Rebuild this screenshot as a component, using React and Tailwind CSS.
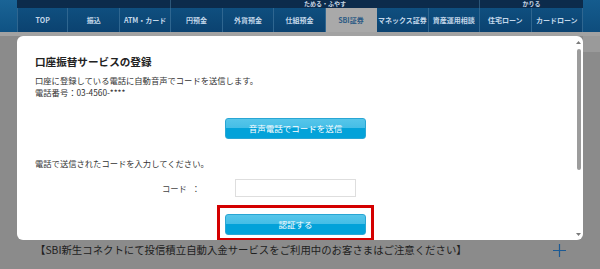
const navItems = [
  'TOP',
  '振込',
  'ATM・カード',
  '円預金',
  '外貨預金',
  '仕組預金',
  'SBI証券',
  'マネックス証券',
  '資産運用相談',
  '住宅ローン',
  'カードローン',
];

const font = { fontFamily: '"Noto Sans CJK JP", "Noto Sans", sans-serif' };

const Header = () => (
  <div className="flex h-[32px]">
    <div className="w-[17px] bg-gradient-to-b from-[#1a6496] to-[#0f5283]" />
    <div className="flex w-[566px] flex-col">
      {/* group labels */}
      <div className="flex h-[8px] bg-[#0c2b4b] text-[6px] font-bold leading-[8px] text-[#c9d8e6]">
        <div className="w-[154px] border-r border-[#2c5678]" />
        <div className="flex w-[309px] justify-center border-r border-[#2c5678]">ためる・ふやす</div>
        <div className="flex flex-1 justify-center">かりる</div>
      </div>
      <div className="grid h-[24px] grid-cols-11">
        {navItems.map((item, i) => (
          <div
            key={item}
            className={`flex items-center justify-center border-r text-[7px] font-bold ${
              item === 'SBI証券'
                ? 'border-[#a9a9a9] bg-[#a9a9a9] text-[#2d5b85]'
                : 'border-[#2f6690] bg-gradient-to-b from-[#0f4f7f] to-[#0b4270] text-[#c4d8ea]'
            } ${i === 0 ? 'border-l border-l-[#2f6690]' : ''}`}
          >
            {item}
          </div>
        ))}
      </div>
    </div>
    <div className="flex-1 bg-gradient-to-b from-[#155c8e] to-[#0e4d7d]" />
  </div>
);

const BlueButton = ({ children }) => (
  <button
    type="button"
    className="flex h-[21px] w-[141px] items-center justify-center rounded-[3px] border border-[#29a6d4] bg-[linear-gradient(to_bottom,#56c6ea_0%,#44bde6_50%,#03a2d9_50%,#03a2d9_100%)] text-[8.5px] text-white"
  >
    {children}
  </button>
);

const Scrollbar = () => (
  <div className="flex w-[9px] flex-col items-center pt-[5px] pb-[4px]">
    <svg width="5" height="3" viewBox="0 0 5 3">
      <path d="M0 3 L2.5 0 L5 3 Z" fill="#7a7a7a" />
    </svg>
    <div className="mt-[5px] h-[121px] w-[4px] rounded-full bg-[#9c9c9c]" />
    <div className="flex-1" />
    <svg width="5" height="3" viewBox="0 0 5 3">
      <path d="M0 0 L2.5 3 L5 0 Z" fill="#7a7a7a" />
    </svg>
  </div>
);

const Modal = () => (
  <div className="flex h-[204px] w-[566px] overflow-hidden rounded-[6px] bg-white">
    <div className="relative flex flex-1 flex-col pl-[18px] pt-[19px] text-[#333]">
      <h2 className="text-[10.6px] font-bold leading-[14px] text-[#222]">口座振替サービスの登録</h2>
      <p className="mt-[5px] text-[8.3px] leading-[12px]">
        口座に登録している電話に自動音声でコードを送信します。
        <br />
        電話番号：03-4560-****
      </p>
      <div className="mt-[20px] flex justify-center pr-[18px]">
        <BlueButton>音声電話でコードを送信</BlueButton>
      </div>
      <p className="mt-[18px] text-[8.3px] leading-[12px]">電話で送信されたコードを入力してください。</p>
      <div className="mt-[10px] flex h-[18px] items-center">
        <div className="ml-[127px] flex w-[38px] justify-between text-[8.3px] text-[#444]">
          <span>コード</span>
          <span>：</span>
        </div>
        <div className="ml-[35px] h-[18px] w-[121px] border border-[#dedede] bg-white" />
      </div>
      <div className="mt-[17px] flex justify-center pr-[18px]">
        <BlueButton>認証する</BlueButton>
      </div>
      {/* annotation box */}
      <div className="absolute left-[200px] top-[169px] h-[36px] w-[157px] border-[3px] border-[#d40000]" />
    </div>
    <Scrollbar />
  </div>
);

export default function App() {
  return (
    <div className="h-[269px] w-[600px] overflow-hidden bg-[#8b8b8b]" style={font}>
      <Header />
      <div className="h-[4px] bg-[#a2a2a2]" />
      <div className="flex">
        <div className="w-[17px]" />
        <Modal />
        <div className="flex-1">
          <div className="h-[16px] bg-[#9a9a9a]" />
        </div>
      </div>
      <div className="flex h-[20px] items-center pl-[35px] pr-[34px]">
        <span className="flex-1 text-[10.4px] leading-[14px] text-[#1e1e1e]">
          【SBI新生コネクトにて投信積立自動入金サービスをご利用中のお客さまはご注意ください】
        </span>
        <svg width="13" height="13" viewBox="0 0 13 13">
          <path d="M6.5 0 V13 M0 6.5 H13" stroke="#1c5a94" strokeWidth="1.2" />
        </svg>
      </div>
    </div>
  );
}
